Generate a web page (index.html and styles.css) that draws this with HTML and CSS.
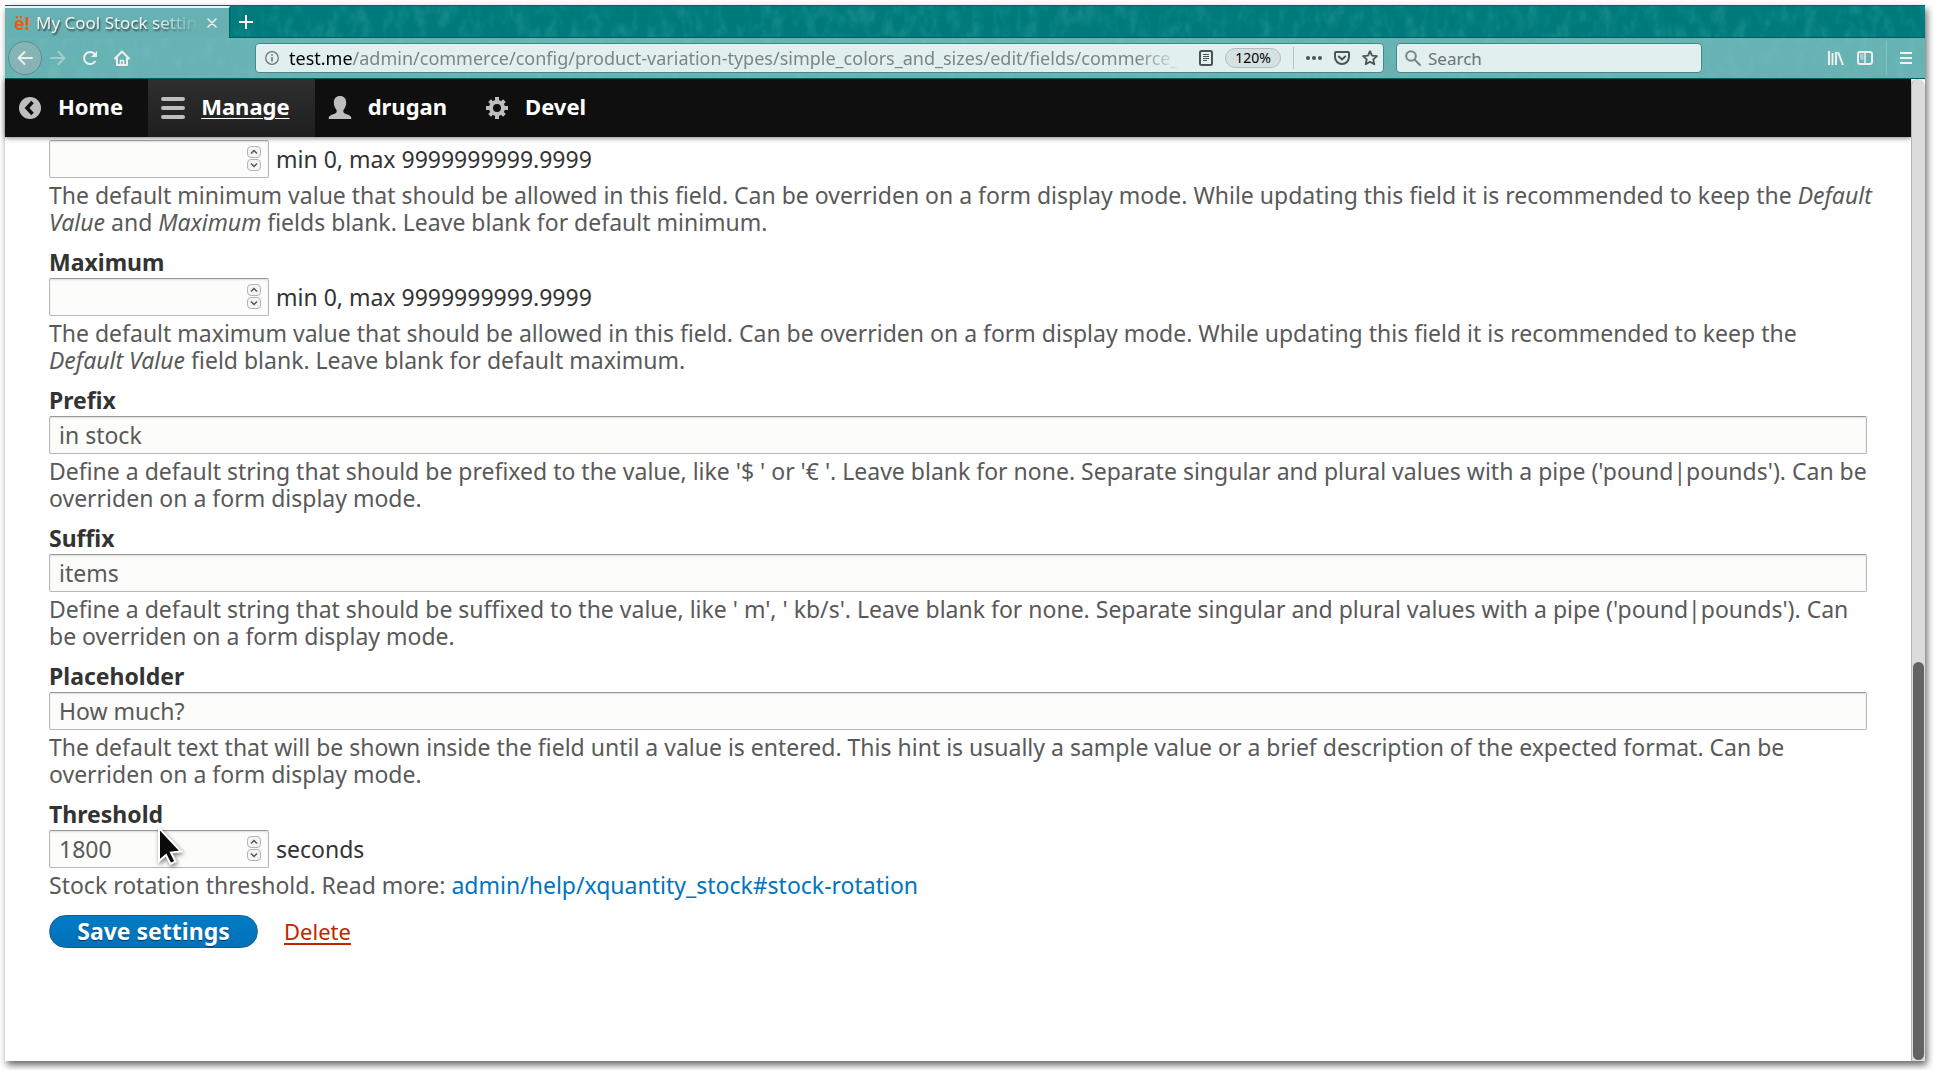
FILE: index.html
```html
<!DOCTYPE html>
<html lang="en">
<head>
<meta charset="utf-8">
<title>My Cool Stock settings</title>
<link rel="stylesheet" href="styles.css">
</head>
<body>
<div class="window">
  <header class="chrome">
    <svg class="texture" aria-hidden="true">
      <filter id="grain" x="0" y="0" width="100%" height="100%">
        <feTurbulence type="fractalNoise" baseFrequency="0.09 0.05" numOctaves="5" seed="4"/>
        <feColorMatrix values="0 0 0 0 0.3  0 0 0 0 0.8  0 0 0 0 0.75  1.6 0 0 0 -0.68"/>
      </filter>
      <rect width="100%" height="100%" filter="url(#grain)"/>
    </svg>
    <div class="tabs">
      <div class="tab">
        <span class="favicon">ë!</span>
        <span class="tab-title">My Cool Stock settin</span>
        <button class="icon-btn" type="button" aria-label="Close tab"><svg width="10" height="10" viewBox="0 0 10 10"><path d="M1 1l8 8M9 1l-8 8" stroke="#eee" stroke-width="1.6" stroke-linecap="round"/></svg></button>
      </div>
      <button class="icon-btn new-tab" type="button" aria-label="New tab"><svg width="14" height="14" viewBox="0 0 14 14"><path d="M7 0v14M0 7h14" stroke="#f4f4f4" stroke-width="2"/></svg></button>
    </div>
    <div class="nav">
      <button class="icon-btn back" type="button" aria-label="Back"><svg width="16" height="16" viewBox="0 0 16 16" fill="none" stroke="#eee" stroke-width="2" stroke-linecap="round" stroke-linejoin="round"><path d="M15 8H1.500M7.500 2l-6 6 6 6"/></svg></button>
      <button class="icon-btn forward" type="button" aria-label="Forward"><svg width="16" height="16" viewBox="0 0 16 16" fill="none" stroke="#eee" stroke-width="2" stroke-linecap="round" stroke-linejoin="round"><path d="M1 8h13.500M8.500 2l6 6-6 6"/></svg></button>
      <button class="icon-btn" type="button" aria-label="Reload"><svg width="16" height="16" viewBox="0 0 16 16" fill="none" stroke="#eee" stroke-width="2" stroke-linecap="round"><path d="M13 11.500A6 6 0 1 1 12.500 4"/><path d="M15 1v6H9z" fill="#eee" stroke="none"/></svg></button>
      <button class="icon-btn" type="button" aria-label="Home page"><svg width="16" height="16" viewBox="0 0 16 16" fill="none" stroke="#eee" stroke-width="2" stroke-linecap="round" stroke-linejoin="round"><path d="M1 8.500L8 1.500l7 7M3 8v7h10V8"/><path d="M6.500 15v-4.500h3V15" stroke-width="1.600"/></svg></button>
      <div class="urlbar">
        <svg width="14" height="14" viewBox="0 0 14 14" fill="none" stroke="#6b7273"><circle cx="7" cy="7" r="6.300" stroke-width="1.200"/><path d="M7 6v4.500M7 3.200v1.600" stroke-width="1.600"/></svg>
        <span class="url"><b>test.me</b>/admin/commerce/config/product-variation-types/simple_colors_and_sizes/edit/fields/commerce_</span>
        <svg class="reader" width="14" height="16" viewBox="0 0 14 16" fill="none" stroke="#4c5354"><rect x="1" y="1" width="12" height="14" rx="1.500" stroke-width="2"/><path d="M4 4.500h6M4 6.500h6M4 8.500h6M4 10.500h4"/></svg>
        <button class="zoom" type="button">120%</button>
        <span class="divider"></span>
        <svg width="16" height="16" viewBox="0 0 16 16" fill="#4c5354"><circle cx="2" cy="8" r="2"/><circle cx="8" cy="8" r="2"/><circle cx="14" cy="8" r="2"/></svg>
        <svg width="16" height="16" viewBox="0 0 16 16" fill="none" stroke="#4c5354" stroke-width="2" stroke-linecap="round" stroke-linejoin="round"><path d="M2 2h12a1 1 0 0 1 1 1v4a7 7 0 0 1-14 0V3a1 1 0 0 1 1-1z"/><path d="M4.800 6.500L8 9.500l3.200-3"/></svg>
        <svg width="16" height="16" viewBox="0 0 16 16" fill="none" stroke="#4c5354" stroke-width="1.800" stroke-linejoin="round"><path d="M8 1.200l2 4.400 4.900.5-3.600 3.300 1 4.900L8 11.800l-4.300 2.500 1-4.900L1.100 6.100 6 5.600z"/></svg>
      </div>
      <label class="search">
        <svg width="16" height="16" viewBox="0 0 16 16" fill="none" stroke="#7b8586" stroke-width="2" stroke-linecap="round"><circle cx="6" cy="6" r="4.800"/><path d="M9.700 9.700L15 15"/></svg>
        <input type="text" placeholder="Search" aria-label="Search">
      </label>
      <div class="tools">
        <svg width="16" height="14" viewBox="0 0 16 14" fill="none" stroke="#eee" stroke-width="2"><path d="M1 0v14M4.500 2v12M8 1v13M10 1l5 13"/></svg>
        <svg width="16" height="14" viewBox="0 0 16 14" fill="none" stroke="#eee"><rect x="1" y="1" width="14" height="12" rx="2" stroke-width="2"/><path d="M8 1v12" stroke-width="1.500"/><path d="M3 4h3.500M3 6h3.500M4 8h2.500"/></svg>
        <span class="divider light"></span>
        <svg width="12" height="12" viewBox="0 0 12 12" stroke="#f4f4f4" stroke-width="2"><path d="M0 1h12M0 6h12M0 11h12"/></svg>
      </div>
    </div>
  </header>

  <div class="viewport">
    <div class="page">
      <nav class="toolbar">
        <a href="#"><svg width="24" height="24" viewBox="0 0 24 24"><circle cx="12" cy="12" r="11" fill="#bebebe"/><path d="M14.500 6L9 12l5.500 6" fill="none" stroke="#0f0f0f" stroke-width="3.500"/></svg><span>Home</span></a>
        <a href="#" class="active"><svg width="24" height="24" viewBox="0 0 24 24" stroke="#bebebe" stroke-width="4" stroke-linecap="round"><path d="M2 3h20M2 12h20M2 21h20"/></svg><span>Manage</span></a>
        <a href="#"><svg width="24" height="24" viewBox="0 0 24 24" fill="#bebebe"><path d="M12 0c3.800 0 6.200 2.600 6.200 6.300 0 3-1 5.400-2.400 7.300-1 1.400-.6 3.200 1 4 2.600 1.200 5.400 1.700 6.200 3.500.3.800.3 1.700.3 1.900H.7c0-.2 0-1.100.3-1.900.8-1.800 3.600-2.300 6.200-3.500 1.600-.8 2-2.600 1-4C6.800 11.700 5.800 9.300 5.800 6.300 5.800 2.600 8.200 0 12 0z"/></svg><span>drugan</span></a>
        <a href="#"><svg width="24" height="24" viewBox="0 0 24 24"><g stroke="#bebebe" stroke-width="4"><path d="M12 1v22M1 12h22M4.600 4.600l14.800 14.800M19.400 4.600L4.600 19.400"/></g><circle cx="12" cy="12" r="8" fill="#bebebe"/><circle cx="12" cy="12" r="4" fill="#0f0f0f"/></svg><span>Devel</span></a>
      </nav>

      <form class="form">
        <div class="item">
          <div class="row">
            <span class="number"><input type="number" aria-label="Minimum"><span class="spin"><button type="button" aria-label="Increase"><svg viewBox="0 0 8 6"><path d="M1 4.500l3-3 3 3"/></svg></button><button type="button" aria-label="Decrease"><svg viewBox="0 0 8 6"><path d="M1 1.500l3 3 3-3"/></svg></button></span></span>
            <span>min 0, max 9999999999.9999</span>
          </div>
          <p>The default minimum value that should be allowed in this field. Can be overriden on a form display mode. While updating this field it is recommended to keep the <em>Default<br>Value</em> and <em>Maximum</em> fields blank. Leave blank for default minimum.</p>
        </div>
        <div class="item">
          <label for="max">Maximum</label>
          <div class="row">
            <span class="number"><input id="max" type="number"><span class="spin"><button type="button" aria-label="Increase"><svg viewBox="0 0 8 6"><path d="M1 4.500l3-3 3 3"/></svg></button><button type="button" aria-label="Decrease"><svg viewBox="0 0 8 6"><path d="M1 1.500l3 3 3-3"/></svg></button></span></span>
            <span>min 0, max 9999999999.9999</span>
          </div>
          <p>The default maximum value that should be allowed in this field. Can be overriden on a form display mode. While updating this field it is recommended to keep the<br><em>Default Value</em> field blank. Leave blank for default maximum.</p>
        </div>
        <div class="item">
          <label for="prefix">Prefix</label>
          <input id="prefix" type="text" value="in stock">
          <p>Define a default string that should be prefixed to the value, like '$ ' or '€ '. Leave blank for none. Separate singular and plural values with a pipe ('pound|pounds'). Can be<br>overriden on a form display mode.</p>
        </div>
        <div class="item">
          <label for="suffix">Suffix</label>
          <input id="suffix" type="text" value="items">
          <p>Define a default string that should be suffixed to the value, like ' m', ' kb/s'. Leave blank for none. Separate singular and plural values with a pipe ('pound|pounds'). Can<br>be overriden on a form display mode.</p>
        </div>
        <div class="item">
          <label for="placeholder">Placeholder</label>
          <input id="placeholder" type="text" value="How much?">
          <p>The default text that will be shown inside the field until a value is entered. This hint is usually a sample value or a brief description of the expected format. Can be<br>overriden on a form display mode.</p>
        </div>
        <div class="item">
          <label for="threshold">Threshold</label>
          <div class="row">
            <span class="number"><input id="threshold" type="number" value="1800"><span class="spin"><button type="button" aria-label="Increase"><svg viewBox="0 0 8 6"><path d="M1 4.500l3-3 3 3"/></svg></button><button type="button" aria-label="Decrease"><svg viewBox="0 0 8 6"><path d="M1 1.500l3 3 3-3"/></svg></button></span>
              <svg class="pointer" width="34" height="42" viewBox="0 0 34 42" aria-hidden="true"><path d="M4 3v33l7-6 4.500 9 5-2.500-4.500-9 10-1z" fill="#0a0a0a" stroke="#fff" stroke-width="2"/></svg></span>
            <span>seconds</span>
          </div>
          <p>Stock rotation threshold. Read more: <a href="#">admin/help/xquantity_stock#stock-rotation</a></p>
        </div>
        <div class="actions">
          <button class="save" type="button">Save settings</button>
          <a class="delete" href="#">Delete</a>
        </div>
      </form>
    </div>
    <div class="scrollbar"><span class="thumb"></span></div>
  </div>
</div>
</body>
</html>
```
FILE: styles.css
```css
* { box-sizing: border-box; }
body {
  margin: 0;
  padding: 5px 9px 9px 5px;
  background: #fff;
  font-family: "Noto Sans", sans-serif;
}
button, input { font: inherit; }
svg { display: block; flex: none; }

.window {
  display: flex;
  flex-direction: column;
  min-height: calc(100vh - 14px);
  background: #fff;
  box-shadow: 2px 4px 7px rgba(0, 0, 0, .6);
}

/* Browser chrome */
.chrome { position: relative; background: #007a7c; }
.texture { position: absolute; width: 100%; height: 100%; opacity: .2; }
.tabs, .nav { position: relative; display: flex; align-items: center; }
.tabs { height: 33px; border-top: 1px solid #00686b; box-shadow: inset 0 -1px #005c60; }
.tab {
  display: flex;
  align-items: center;
  width: 225px;
  height: 32px;
  padding: 0 12px 0 9px;
  border-top: 2px solid #f2f2f2;
  border-right: 1px solid #005c60;
  background: #68b1b2;
}
.favicon { width: 22px; color: #f25a12; font-size: 18px; font-weight: 700; }
.tab-title {
  flex: 1;
  overflow: hidden;
  margin-right: 4px;
  color: #f2f2f2;
  font-size: 17px;
  line-height: 28px;
  white-space: nowrap;
  text-shadow: 1px 2px 2px rgba(0, 0, 0, .6);
  -webkit-mask-image: linear-gradient(90deg, #000 70%, transparent 98%);
  mask-image: linear-gradient(90deg, #000 70%, transparent 98%);
}
.icon-btn { display: block; padding: 0; border: 0; background: none; }
.new-tab { margin-left: 9px; }
.nav {
  gap: 16px;
  height: 41px;
  padding: 0 13px 0 3px;
  border-bottom: 1px solid #005c60;
  background: rgba(137, 198, 198, .75);
}
.back {
  display: grid;
  place-items: center;
  width: 34px;
  height: 34px;
  margin-right: -8px;
  border: 1px solid #56908f;
  border-radius: 50%;
  background: #86b3b3;
}
.forward { opacity: .45; }
.urlbar, .search {
  display: flex;
  align-items: center;
  height: 30px;
  border: 1px solid #43898a;
  border-radius: 4px;
  background: #e1efef;
}
.urlbar { flex: 1; gap: 12px; min-width: 0; margin-left: 109px; padding: 0 5px 0 9px; }
.url {
  flex: 1;
  overflow: hidden;
  margin: 0 6px 0 -2px;
  color: #7d8485;
  font-size: 18px;
  white-space: nowrap;
  -webkit-mask-image: linear-gradient(90deg, #000 95%, transparent);
  mask-image: linear-gradient(90deg, #000 95%, transparent);
}
.url b { color: #000; font-weight: 400; }
.zoom {
  width: 56px;
  height: 20px;
  padding: 0;
  border: 1px solid #b3bfbf;
  border-radius: 10px;
  background: #d5e2e2;
  font-size: 14px;
  line-height: 18px;
}
.divider { width: 1px; height: 22px; background: #b7c4c4; }
.divider.light { height: 34px; background: #88bfc0; }
.search { gap: 7px; width: 306px; margin-left: -4px; padding: 0 8px; }
.search input { flex: 1; min-width: 0; padding: 0; border: 0; outline: 0; background: none; font-size: 17px; }
.search input::placeholder { color: #6c7475; opacity: 1; }
.tools { display: flex; align-items: center; gap: 13px; margin-left: 110px; }

/* Page */
.viewport { display: flex; flex: 1; }
.page { flex: 1; min-width: 0; }
.scrollbar {
  display: grid;
  grid-template-rows: 583fr 398fr;
  width: 14px;
  padding: 0 1px 1px;
  border-left: 1px solid #b5b5b5;
  border-radius: 8px 8px 0 0;
  background: #dcdcdc;
}
.thumb { grid-row: 2; border-radius: 6px; background: #636363; }

.toolbar {
  display: flex;
  height: 58px;
  background: #0f0f0f;
  box-shadow: 0 1px 5px rgba(0, 0, 0, .5);
  font-size: 22px;
  font-weight: 700;
}
.toolbar a {
  display: flex;
  align-items: center;
  gap: 16px;
  padding: 0 25px 0 13px;
  color: #fff;
  text-decoration: none;
}
.toolbar span { padding-bottom: 4px; }
.toolbar .active { background: linear-gradient(#2e2e2e, #1f1f1f); }
.toolbar .active span { text-decoration: underline; text-decoration-thickness: 1px; text-underline-offset: 3px; }

.form { padding: 3px 44px 110px; color: #333; font-size: 23px; line-height: 27px; }
.item { margin-bottom: 13px; }
.item label { display: block; margin-bottom: 2px; font-weight: 700; }
.item p { margin: 4px -12px 0 0; color: #595959; }
.item p a { color: #0074bd; text-decoration: none; }
.item input {
  display: block;
  width: 100%;
  height: 38px;
  padding: 0 9px;
  border: 1px solid #b8b8b8;
  border-top-color: #999;
  border-radius: 2px;
  background: #fcfcfa;
  box-shadow: inset 0 1px 2px rgba(0, 0, 0, .13);
  color: #595959;
  appearance: textfield;
}
.item input::-webkit-inner-spin-button { display: none; }
.row { display: flex; align-items: center; gap: 7px; }
.number { position: relative; width: 220px; }
.spin { position: absolute; top: 6px; right: 8px; display: grid; gap: 1px; }
.spin button {
  display: grid;
  place-items: center;
  width: 14px;
  height: 12px;
  padding: 0;
  border: 1px solid #b5b5b5;
  border-radius: 4px;
  background: #f4f4f4;
}
.spin svg { width: 8px; height: 6px; fill: none; stroke: #555; stroke-width: 1.5; }
.pointer { position: absolute; top: -5px; left: 106px; filter: drop-shadow(1px 2px 2px rgba(0, 0, 0, .5)); }
.actions { display: flex; align-items: center; gap: 26px; margin-top: 16px; }
.save {
  width: 209px;
  height: 33px;
  padding: 0;
  border: 1px solid #1e5c90;
  border-radius: 17px;
  background: linear-gradient(#007bc6, #0071b8);
  color: #fff;
  font-weight: 700;
  line-height: 29px;
  text-shadow: 0 1px rgba(0, 0, 0, .5);
}
.delete { color: #c72100; font-size: 22px; text-decoration-thickness: 2px; text-underline-offset: 3px; }
```
